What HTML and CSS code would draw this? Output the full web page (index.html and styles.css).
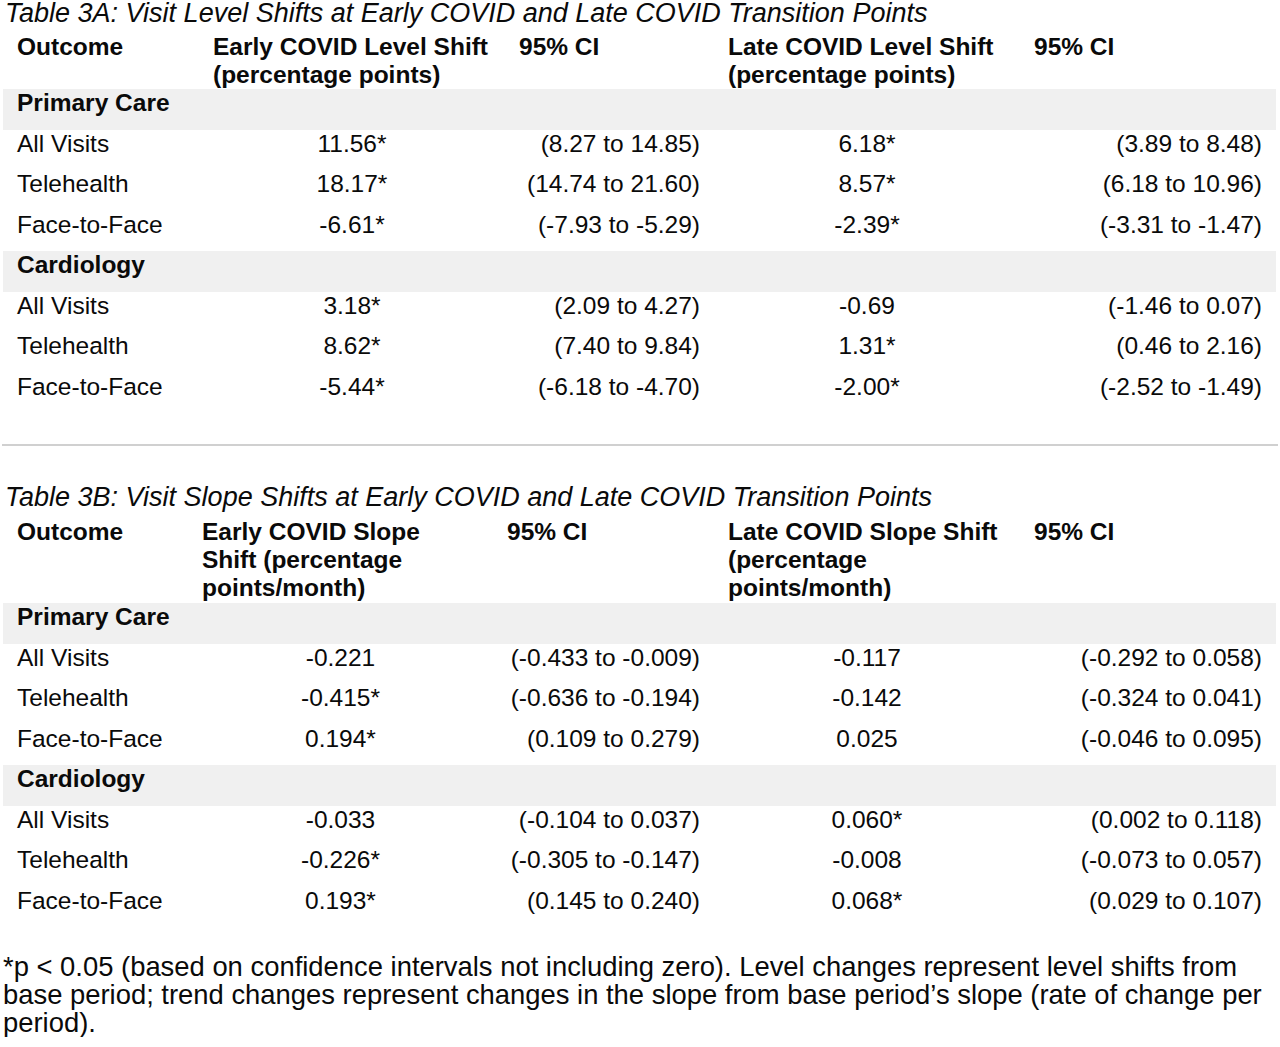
FILE: index.html
```html
<!DOCTYPE html>
<html lang="en">
<head>
<meta charset="utf-8">
<title>Table 3A and 3B</title>
<link rel="stylesheet" href="styles.css">
</head>
<body>
<div class="page">
  <p class="caption">Table 3A: Visit Level Shifts at Early COVID and Late COVID Transition Points</p>
  <table class="data tbl-a">
    <colgroup>
      <col class="c1"><col class="c2"><col class="c3"><col class="c4"><col class="c5">
    </colgroup>
    <thead>
      <tr>
        <th>Outcome</th>
        <th>Early COVID Level Shift<br>(percentage points)</th>
        <th>95% CI</th>
        <th>Late COVID Level Shift<br>(percentage points)</th>
        <th>95% CI</th>
      </tr>
    </thead>
    <tbody>
      <tr class="group"><td colspan="5">Primary Care</td></tr>
      <tr><td>All Visits</td><td class="mid">11.56*</td><td class="num">(8.27 to 14.85)</td><td class="mid">6.18*</td><td class="num">(3.89 to 8.48)</td></tr>
      <tr><td>Telehealth</td><td class="mid">18.17*</td><td class="num">(14.74 to 21.60)</td><td class="mid">8.57*</td><td class="num">(6.18 to 10.96)</td></tr>
      <tr><td>Face-to-Face</td><td class="mid">-6.61*</td><td class="num">(-7.93 to -5.29)</td><td class="mid">-2.39*</td><td class="num">(-3.31 to -1.47)</td></tr>
      <tr class="group"><td colspan="5">Cardiology</td></tr>
      <tr><td>All Visits</td><td class="mid">3.18*</td><td class="num">(2.09 to 4.27)</td><td class="mid">-0.69</td><td class="num">(-1.46 to 0.07)</td></tr>
      <tr><td>Telehealth</td><td class="mid">8.62*</td><td class="num">(7.40 to 9.84)</td><td class="mid">1.31*</td><td class="num">(0.46 to 2.16)</td></tr>
      <tr><td>Face-to-Face</td><td class="mid">-5.44*</td><td class="num">(-6.18 to -4.70)</td><td class="mid">-2.00*</td><td class="num">(-2.52 to -1.49)</td></tr>
    </tbody>
  </table>

  <hr class="divider">

  <p class="caption caption-b">Table 3B: Visit Slope Shifts at Early COVID and Late COVID Transition Points</p>
  <table class="data tbl-b">
    <colgroup>
      <col class="c1"><col class="c2"><col class="c3"><col class="c4"><col class="c5">
    </colgroup>
    <thead>
      <tr>
        <th>Outcome</th>
        <th>Early COVID Slope<br>Shift (percentage<br>points/month)</th>
        <th>95% CI</th>
        <th>Late COVID Slope Shift<br>(percentage<br>points/month)</th>
        <th>95% CI</th>
      </tr>
    </thead>
    <tbody>
      <tr class="group"><td colspan="5">Primary Care</td></tr>
      <tr><td>All Visits</td><td class="mid">-0.221</td><td class="num">(-0.433 to -0.009)</td><td class="mid">-0.117</td><td class="num">(-0.292 to 0.058)</td></tr>
      <tr><td>Telehealth</td><td class="mid">-0.415*</td><td class="num">(-0.636 to -0.194)</td><td class="mid">-0.142</td><td class="num">(-0.324 to 0.041)</td></tr>
      <tr><td>Face-to-Face</td><td class="mid">0.194*</td><td class="num">(0.109 to 0.279)</td><td class="mid">0.025</td><td class="num">(-0.046 to 0.095)</td></tr>
      <tr class="group"><td colspan="5">Cardiology</td></tr>
      <tr><td>All Visits</td><td class="mid">-0.033</td><td class="num">(-0.104 to 0.037)</td><td class="mid">0.060*</td><td class="num">(0.002 to 0.118)</td></tr>
      <tr><td>Telehealth</td><td class="mid">-0.226*</td><td class="num">(-0.305 to -0.147)</td><td class="mid">-0.008</td><td class="num">(-0.073 to 0.057)</td></tr>
      <tr><td>Face-to-Face</td><td class="mid">0.193*</td><td class="num">(0.145 to 0.240)</td><td class="mid">0.068*</td><td class="num">(0.029 to 0.107)</td></tr>
    </tbody>
  </table>

  <p class="footnote">*p &lt; 0.05 (based on confidence intervals not including zero). Level changes represent level shifts from base period; trend changes represent changes in the slope from base period’s slope (rate of change per period).</p>
</div>
</body>
</html>
```

FILE: styles.css
```css
html, body {
  margin: 0;
  padding: 0;
  background: #ffffff;
}

body {
  font-family: "Liberation Sans", Arial, sans-serif;
  font-size: 24.5px;
  color: #0a0a0a;
}

.page {
  width: 1280px;
  display: flex;
  flex-direction: column;
}

.caption {
  margin: 0;
  padding-left: 5px;
  font-size: 27px;
  font-style: italic;
  line-height: 26px;
  white-space: nowrap;
}

.caption-b {
  margin-top: 38px;
}

.data {
  margin-left: 3px;
  width: 1273px;
  table-layout: fixed;
  border-collapse: collapse;
  border-spacing: 0;
}

.data th,
.data td {
  padding: 0 14px;
  line-height: 28px;
  white-space: nowrap;
}

.data th {
  text-align: left;
  vertical-align: top;
  font-weight: bold;
  padding-top: 7px;
}

.tbl-b th {
  padding-top: 8px;
  padding-bottom: 1px;
}

.data tbody tr {
  height: 40.5px;
}

.data td {
  vertical-align: top;
  padding-top: 0;
  text-align: left;
}

.data td.mid {
  text-align: center;
}

.data td.num {
  text-align: right;
}

.data tr.group td {
  background: #f0f0f0;
  font-weight: bold;
}

.tbl-a .c1 { width: 196px; }
.tbl-a .c2 { width: 306px; }
.tbl-a .c3 { width: 209px; }
.tbl-a .c4 { width: 306px; }
.tbl-a .c5 { width: 256px; }

.tbl-b .c1 { width: 185px; }
.tbl-b .c2 { width: 305px; }
.tbl-b .c3 { width: 221px; }
.tbl-b .c4 { width: 306px; }
.tbl-b .c5 { width: 256px; }

.divider {
  margin: 31px 0 0 2px;
  width: 1276px;
  height: 2px;
  border: 0;
  background: #d0d0d0;
}

.footnote {
  margin: 26px 0 0 0;
  padding-left: 3px;
  width: 1272px;
  font-size: 27.4px;
  line-height: 28px;
}
```
